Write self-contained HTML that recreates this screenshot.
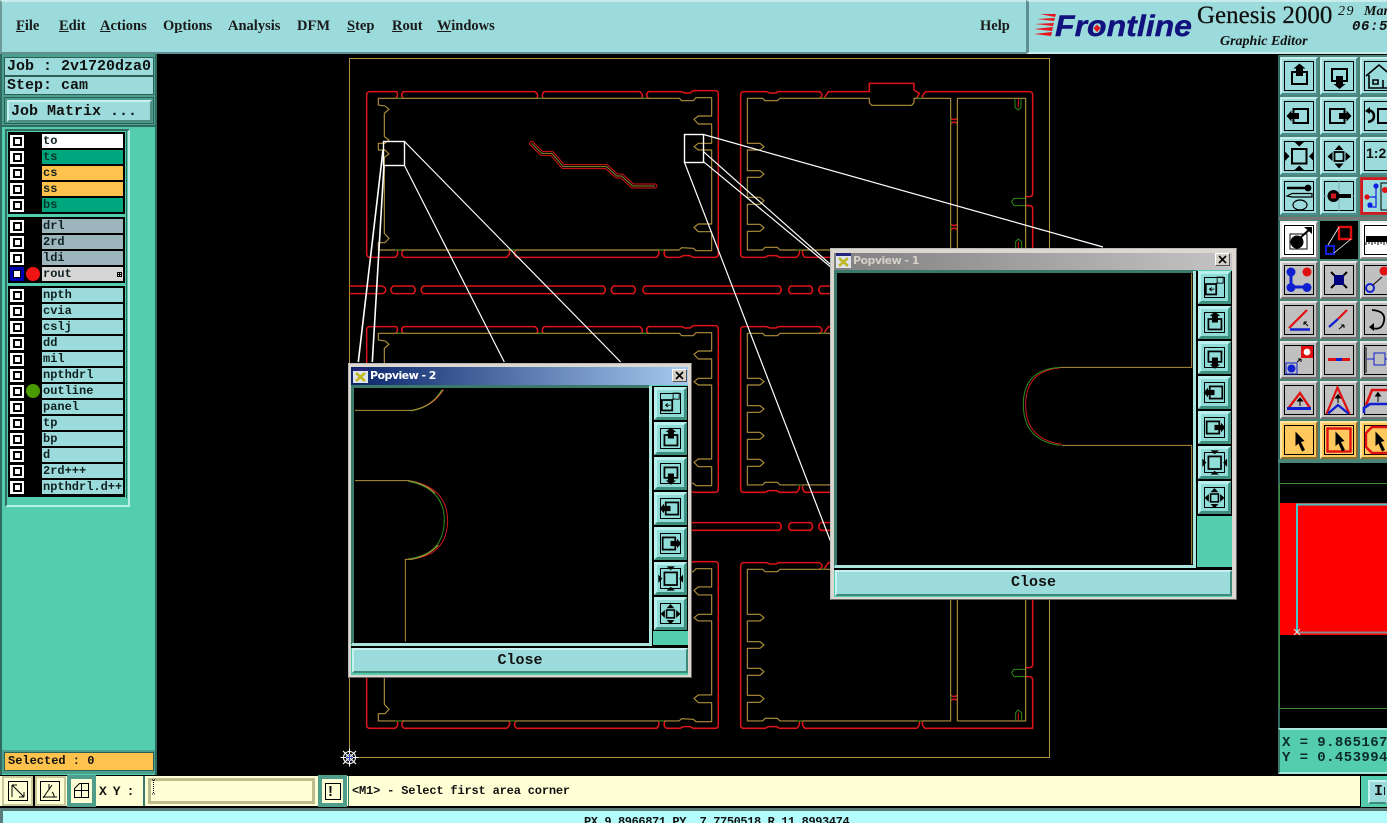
<!DOCTYPE html>
<html><head><meta charset="utf-8"><style>
html,body{margin:0;padding:0;background:#000;width:1387px;height:823px;overflow:hidden}
#r{position:relative;width:1387px;height:823px;overflow:hidden;background:#000}
#r div,#r svg,#r span{position:absolute;box-sizing:border-box}
.m{font-family:"Liberation Mono",monospace;white-space:pre;color:#111}
.mn{font:bold 14.5px/16px "Liberation Serif",serif;top:18px;color:#1a1a1a;white-space:pre}
.mn u{text-decoration:underline}
.lb{left:4px;width:150px;background:#9cdbdb;border:1px solid #2c5f55;font-size:15px;padding-left:2px;font-weight:bold}
.cb{left:10px;width:14px;height:13px;background:#fff}
.cb:after{content:"";position:absolute;left:3px;top:2px;width:9px;height:9px;border:2px solid #000;box-sizing:border-box;background:#fff}
.nm{left:42px;width:81px;height:14px;font:bold 12px/15px "Liberation Mono",monospace;padding-left:1px;color:#102020;background:#9cdbdb;white-space:pre;overflow:hidden}
.tb{width:38px;height:38px;border:2px solid;border-color:#c8efef #4f8d8d #4f8d8d #c8efef;background:#9cdbdb}
.tb.g{background:#c0c0c0;border-color:#e6e6e6 #707070 #707070 #e6e6e6}
.tb.w{background:#fff;border-color:#f0f0f0 #8a8a8a #8a8a8a #f0f0f0}
.tb.o{background:#ffc95e;border-color:#ffe4a0 #8d6d2d #8d6d2d #ffe4a0}
.tb i{position:absolute;left:2px;top:2px;width:30px;height:30px;border:1px solid #000;box-sizing:border-box}
.tb svg{left:-2px;top:-2px;width:38px;height:38px}
.pb{width:33px;height:33px;border:3px solid;border-color:#b8f0ee #3f8f7e #3f8f7e #b8f0ee;background:#90dcd8}
.pb i{position:absolute;left:3px;top:3px;width:21px;height:21px;border:1px solid #000;box-sizing:border-box}
.pb svg{left:-3px;top:-3px;width:33px;height:33px}
.cl{border:2px solid;border-color:#c8f2f2 #3d8a78 #3d8a78 #c8f2f2;background:#9cdbdb;text-align:center;font:bold 15px/21px "Liberation Mono",monospace;color:#111}
.tt{font:bold 11px/16px "DejaVu Sans",sans-serif;letter-spacing:-.55px;white-space:pre}
.x{width:15px;height:13px;background:#d4d0c8;border:1px solid;border-color:#fff #555 #555 #fff}
.bc{fill:none;stroke:#000;stroke-width:2}
</style></head><body><div id="r">

<!-- top bars -->
<div style="left:0;top:0;width:1028px;height:54px;background:#9cdbdb;border-top:2px solid #c8ecec;border-bottom:2px solid #5f8f92;border-left:2px solid #6f9a9a;border-right:2px solid #5f8f92"></div>
<div style="left:1026px;top:0;width:361px;height:54px;background:#9cdbdb;border-left:3px solid #5f8f92;border-bottom:2px solid #c8ecec;border-top:2px solid #c8ecec"></div>
<div class="mn" style="left:16px"><u>F</u>ile</div>
<div class="mn" style="left:59px"><u>E</u>dit</div>
<div class="mn" style="left:100px"><u>A</u>ctions</div>
<div class="mn" style="left:163px">O<u>p</u>tions</div>
<div class="mn" style="left:228px">Analysis</div>
<div class="mn" style="left:297px">DFM</div>
<div class="mn" style="left:347px"><u>S</u>tep</div>
<div class="mn" style="left:392px"><u>R</u>out</div>
<div class="mn" style="left:437px"><u>W</u>indows</div>
<div class="mn" style="left:980px">Help</div>

<!-- logo -->
<svg style="left:1030px;top:0" width="357" height="54" viewBox="1030 0 357 54">
<g fill="#e8141c"><path d="M1040 14L1056 14 1055 17Z"/><path d="M1037 19L1055 18 1054 21Z"/><path d="M1035 24L1054 23 1053 26Z"/><path d="M1034 29L1053 27 1052 31Z"/><path d="M1034 34L1052 32 1051 36Z"/></g>
<text x="1055" y="36" font-family="Liberation Sans" font-weight="bold" font-style="italic" font-size="30" fill="#12127e" stroke="#12127e" stroke-width=".4" textLength="137" lengthAdjust="spacingAndGlyphs">Frontline</text>
<path d="M1097 24.5l3.5 3.8-3.5 3.8-3.5-3.8z" fill="#e8141c"/>
<text x="1197" y="23" font-family="Liberation Serif" font-size="25" fill="#111" stroke="#111" stroke-width=".25">Genesis 2000</text>
<text x="1220" y="45" font-family="Liberation Serif" font-weight="bold" font-style="italic" font-size="14" fill="#111">Graphic Editor</text>
<text x="1338" y="15" font-family="Liberation Serif" font-style="italic" font-size="14" letter-spacing="1.5" fill="#111">29</text>
<text x="1364" y="15" font-family="Liberation Serif" font-weight="bold" font-style="italic" font-size="14" fill="#111">Mar</text>
<text x="1352" y="30" font-family="Liberation Mono" font-weight="bold" font-style="italic" font-size="14" letter-spacing=".6" fill="#111">06:5</text>
</svg>

<!-- left panel -->
<div style="left:0;top:54px;width:157px;height:722px;background:#54cdae;border-right:2px solid #2f6b60;border-left:2px solid #2f6b60"></div>
<div style="left:2px;top:54px;width:153px;height:73px;background:#4c9f8c;border-bottom:2px solid #2f6b60"></div>
<div class="m lb" style="top:57px;height:19px;line-height:18px">Job : 2v1720dza0</div>
<div class="m lb" style="top:76px;height:19px;line-height:18px">Step: cam</div>
<div class="m lb" style="top:97px;height:27px;background:#4c9f8c"></div>
<div class="m" style="left:7px;top:100px;width:145px;height:22px;background:#9cdbdb;border:2px solid;border-color:#c8f2f2 #4d8d82 #4d8d82 #c8f2f2;font:bold 15px/19px 'Liberation Mono',monospace;padding-left:2px">Job Matrix ...</div>

<div style="left:5px;top:129px;width:125px;height:378px;background:#54cdae;border:2px solid;border-color:#2f6b60 #b8f0e4 #b8f0e4 #2f6b60"></div>
<div style="left:7px;top:131px;width:120px;height:367px;background:#54cdae;border-right:1px solid #2f6b60"></div>
<div style="left:8px;top:132px;width:117px;height:82px;background:#000"></div>
<div style="left:8px;top:217px;width:117px;height:66px;background:#000"></div>
<div style="left:8px;top:286px;width:117px;height:211px;background:#000"></div>

<div class="cb" style="top:135px"></div><div class="nm" style="top:134px;background:#fff">to</div>
<div class="cb" style="top:151px"></div><div class="nm" style="top:150px;background:#00a67d;color:#043528">ts</div>
<div class="cb" style="top:167px"></div><div class="nm" style="top:166px;background:#ffc34d">cs</div>
<div class="cb" style="top:183px"></div><div class="nm" style="top:182px;background:#ffc34d">ss</div>
<div class="cb" style="top:199px"></div><div class="nm" style="top:198px;background:#00a67d;color:#043528">bs</div>

<div class="cb" style="top:220px"></div><div class="nm" style="top:219px;background:#9db5bd">drl</div>
<div class="cb" style="top:236px"></div><div class="nm" style="top:235px;background:#9db5bd">2rd</div>
<div class="cb" style="top:252px"></div><div class="nm" style="top:251px;background:#9db5bd">ldi</div>
<div style="left:10px;top:267px;width:14px;height:14px;background:#0000b0"></div>
<div style="left:13px;top:270px;width:8px;height:8px;background:#fff;border:1px solid #000"></div>
<div style="left:26px;top:267px;width:14px;height:14px;border-radius:50%;background:#f01414"></div>
<div class="nm" style="top:267px;background:#d6d6d6">rout</div>
<div style="left:117px;top:272px;width:5px;height:5px;border:1px solid #000;background:linear-gradient(#000,#000) center/1px 5px no-repeat,linear-gradient(#000,#000) center/5px 1px no-repeat"></div>

<div class="cb" style="top:289px"></div><div class="nm" style="top:288px">npth</div>
<div class="cb" style="top:305px"></div><div class="nm" style="top:304px">cvia</div>
<div class="cb" style="top:321px"></div><div class="nm" style="top:320px">cslj</div>
<div class="cb" style="top:337px"></div><div class="nm" style="top:336px">dd</div>
<div class="cb" style="top:353px"></div><div class="nm" style="top:352px">mil</div>
<div class="cb" style="top:369px"></div><div class="nm" style="top:368px">npthdrl</div>
<div class="cb" style="top:385px"></div><div class="nm" style="top:384px">outline</div>
<div style="left:26px;top:384px;width:14px;height:14px;border-radius:50%;background:#4a9a00"></div>
<div class="cb" style="top:401px"></div><div class="nm" style="top:400px">panel</div>
<div class="cb" style="top:417px"></div><div class="nm" style="top:416px">tp</div>
<div class="cb" style="top:433px"></div><div class="nm" style="top:432px">bp</div>
<div class="cb" style="top:449px"></div><div class="nm" style="top:448px">d</div>
<div class="cb" style="top:465px"></div><div class="nm" style="top:464px">2rd+++</div>
<div class="cb" style="top:481px"></div><div class="nm" style="top:480px">npthdrl.d++</div>

<div style="left:2px;top:750px;width:153px;height:24px;background:#4c9f8c"></div>
<div class="m" style="left:4px;top:752px;width:150px;height:19px;background:#ffc34d;border:1px solid #2c5f55;font:bold 12px/17px 'Liberation Mono',monospace;padding-left:3px">Selected : 0</div>

<!-- CAM canvas -->
<svg style="left:0;top:0" width="1387" height="823" viewBox="0 0 1387 823">
<defs>
<g id="bl" fill="none" stroke-linejoin="round">
<g stroke="#dc1418" stroke-width="4.6">
<path d="M168,145Q176,135 170,125L90,125Q80,125 80,135L80,610Q80,622 90,622L165,622Q176,616 172,600"/>
<path d="M190,145Q180,135 190,125L585,125Q598,135 590,145"/>
<path d="M610,145Q603,135 612,125L900,125Q911,135 905,145"/>
<path d="M925,145Q915,135 925,125L1025,125 1035,129 1050,129 1060,122 1125,122Q1135,122 1135,132L1135,612Q1135,622 1125,622L1060,622 1050,617 1030,617 1020,622 980,622Q968,615 975,600"/>
<path d="M190,600Q180,612 192,622L500,622Q512,612 508,600"/>
<path d="M528,600Q518,612 530,622L950,622Q960,612 955,600"/>
</g>
<path stroke="#b0903c" stroke-width="3.4" d="M115,145L1018,145 1025,152 1060,152 1068,143 1115,143 1115,198 1075,198 1062,208 1075,222 1115,222 1115,280 1075,280 1062,290 1075,300 1115,300 1115,522 1075,522 1062,532 1075,545 1115,545 1115,602 1068,602 1060,595 1025,593 1017,600 115,600 115,578 135,578 147,565 133,550 133,322 147,312 135,300 115,300 115,280 135,280 147,270 133,260 133,190 147,178 135,168 115,165Z"/>
<path stroke="#2e8b1a" stroke-width="3" d="M170,145H187M595,145H610M905,145H920M165,600H187M510,600H527M955,600H972"/>
</g>
<g id="br" fill="none" stroke-linejoin="round">
<g stroke="#dc1418" stroke-width="4.6">
<path d="M358,145Q374,135 358,125L235,125 228,129 210,129 200,125 132,125Q122,125 122,135L122,612Q122,622 132,622L195,622 205,617 230,617 238,622 290,622Q300,614 298,600"/>
<path d="M372,145Q378,135 385,125L508,125 508,100 642,100 642,120 658,130 650,145"/>
<path d="M668,145Q665,135 678,125L988,125Q998,125 998,135L998,430Q998,440 988,440L978,440"/>
<path d="M978,467L988,467Q998,467 998,477L998,622 675,622Q665,614 667,600"/>
<path d="M308,600Q305,614 315,622L650,622Q660,614 658,600"/>
<path d="M752,205Q762,212 772,205M752,220Q762,213 772,220M752,523Q762,530 772,523M752,538Q762,531 772,538"/>
<path d="M955,145V172M955,600V575" stroke-width="3"/>
</g>
<path stroke="#b0903c" stroke-width="3.4" d="M142,145L188,145 195,152 232,152 240,145 508,145 508,158 515,166 635,166 642,158 642,145 752,145 752,600 240,600 232,592 195,592 188,600 142,600 142,544 180,544 192,533 180,523 142,523 142,463 180,463 192,452 180,442 142,442 142,382 180,382 192,372 180,362 142,362 142,300 180,300 192,290 180,280 142,280Z"/>
<path stroke="#b0903c" stroke-width="3.4" d="M772,600V145H977V600H772"/>
<path stroke="#2e8b1a" stroke-width="3" d="M362,145H378M650,145H668M290,600H308M650,600H667M945,145V172L955,180 963,172V145M975,445H942L935,455 942,467H975M947,600V575L955,567 965,575V600M752,205V220M752,523V538"/>
</g>
<g id="st" fill="none" stroke="#dc1418" stroke-width="4.6">
<path d="M28,708H125Q137,710 137,720 137,730 125,731H28"/>
<path d="M160,708H220Q231,720 220,731H160Q145,720 160,708Z"/>
<path d="M250,708H790Q802,720 790,731H250Q237,720 250,708Z"/>
<path d="M820,708H880Q892,720 880,731H820Q808,720 820,708Z"/>
<path d="M915,708H1318Q1329,720 1318,731H915Q902,720 915,708Z"/>
<path d="M1352,708H1412Q1423,720 1412,731H1352Q1340,720 1352,708Z"/>
<path d="M1442,708H2127M2127,731H1442Q1431,720 1442,708"/>
</g>
</defs>
<rect x="349.5" y="58.5" width="700" height="699" fill="none" stroke="#b0903c" stroke-width="1"/>
<g transform="translate(340 50) scale(.33333)">
<use href="#bl"/><use href="#bl" y="705"/><use href="#bl" y="1413"/>
<use href="#st"/><use href="#st" y="710"/>
<g fill="none" stroke-linejoin="round"><path d="M575,280L605,310 635,310 670,350 800,350 830,378 845,378 878,408 945,408" stroke="#dc1418" stroke-width="15" stroke-linecap="round"/><path d="M575,280L605,310 635,310 670,350 800,350 830,378 845,378 878,408 945,408" stroke="#000" stroke-width="9" stroke-linecap="round"/><path d="M575,280L605,310 635,310 670,350 800,350 830,378 845,378 878,408 945,408" stroke="#8a8a30" stroke-width="3"/></g>
</g>
<g transform="translate(700 50) scale(.33333)">
<use href="#br"/><use href="#br" y="705"/><use href="#br" y="1413"/>
</g>
<!-- white lines -->
<g fill="none" stroke="#fff" stroke-width="1.2">
<rect x="383.5" y="141.5" width="21" height="24" stroke-width="1.4"/>
<path d="M404.5 141.5L620.7 362M404.5 165.5L504.3 362"/>
<path d="M383 150L358.3 362M384 165L372.3 362" stroke-width="1.6"/>
<rect x="684.5" y="134.5" width="19" height="28" stroke-width="1.4"/>
<path d="M703.5 134.5L1103 247M703.5 151.7L830 264M703.5 161.7L832 268M684.5 162.5L832 545"/>
</g>
<g stroke="#fff" stroke-width="1.1" fill="none">
<circle cx="349.5" cy="757.5" r="6"/><circle cx="349.5" cy="757.5" r="3"/>
<path d="M340.5 757.5H358.5M349.5 748.5V766.5M343 751L356 764M356 751L343 764"/>
</g>
<path d="M346 757.5H353M349.5 754V761" stroke="#3040d0" stroke-width="1"/>
</svg>

<!-- popup 2 -->
<div style="left:348px;top:363px;width:344px;height:315px;background:#dcd8d0;border:1px solid #bbb;border-right-color:#666;border-bottom-color:#666"></div>
<div style="left:351px;top:367px;width:337px;height:18px;background:linear-gradient(90deg,#0a246a,#a6caf0)"></div>
<svg style="left:353px;top:368px" width="15" height="15" viewBox="0 0 15 15"><rect width="15" height="15" fill="#dfe4ef"/><rect width="15" height="3" fill="#24247a"/><path d="M3 5L12 13M12 5L3 13" stroke="#c0b820" stroke-width="2.6"/></svg>
<div class="tt" style="left:370px;top:368px;color:#fff">Popview - 2</div>
<div class="x" style="left:672px;top:369px"></div>
<svg style="left:672px;top:369px" width="15" height="13"><path d="M4 3L11 10M11 3L4 10" stroke="#000" stroke-width="1.6"/></svg>
<div style="left:351px;top:385px;width:337px;height:290px;background:#54cdae"></div>
<div style="left:351px;top:385px;width:298px;height:3px;background:#3a7a6a"></div>
<div style="left:351px;top:385px;width:3px;height:259px;background:#3a7a6a"></div>
<div style="left:354px;top:388px;width:295px;height:255px;background:#000"></div>
<div style="left:649px;top:386px;width:3px;height:259px;background:#a8e6de"></div>
<div style="left:352px;top:643px;width:300px;height:3px;background:#a8e6de"></div>
<div style="left:652px;top:386px;width:36px;height:261px;background:#000"></div>
<div style="left:653px;top:631px;width:35px;height:14px;background:#54cdae"></div>
<div style="left:351px;top:646px;width:337px;height:2px;background:#000"></div>
<div class="cl" style="left:352px;top:648px;width:336px;height:25px">Close</div>

<svg style="left:345px;top:355px" width="350" height="330" viewBox="0 0 1050 990"><g fill="none" stroke-width="3">
<path d="M200,166Q262,158 296,103" stroke="#d01820"/><path d="M190,377Q306,395 308,497 306,605 190,613" stroke="#d01820"/>
<path d="M196,168Q258,160 290,105M190,379Q298,400 298,497 295,600 190,611" stroke="#2e8b1a"/>
<path d="M30,166H200Q260,156 294,104M30,377H190M190,377Q240,385 270,415M181,860V613H200Q250,603 280,570" stroke="#b0903c"/></g></svg>

<!-- popup 1 -->
<div style="left:830px;top:248px;width:407px;height:352px;background:#dcd8d0;border:1px solid #bbb;border-right-color:#666;border-bottom-color:#666"></div>
<div style="left:834px;top:253px;width:398px;height:17px;background:linear-gradient(90deg,#808080,#c4c4c4)"></div>
<svg style="left:836px;top:253px" width="15" height="15" viewBox="0 0 15 15"><rect width="15" height="15" fill="#dfe4ef"/><rect width="15" height="3" fill="#24247a"/><path d="M3 5L12 13M12 5L3 13" stroke="#c0b820" stroke-width="2.6"/></svg>
<div class="tt" style="left:853px;top:253px;color:#d4d0c8">Popview - 1</div>
<div class="x" style="left:1215px;top:253px"></div>
<svg style="left:1215px;top:253px" width="15" height="13"><path d="M4 3L11 10M11 3L4 10" stroke="#000" stroke-width="1.6"/></svg>
<div style="left:834px;top:270px;width:398px;height:327px;background:#54cdae"></div>
<div style="left:834px;top:270px;width:363px;height:3px;background:#3a7a6a"></div>
<div style="left:834px;top:270px;width:3px;height:296px;background:#3a7a6a"></div>
<div style="left:837px;top:273px;width:356px;height:292px;background:#000"></div>
<div style="left:1193px;top:271px;width:3px;height:295px;background:#a8e6de"></div>
<div style="left:835px;top:565px;width:361px;height:3px;background:#a8e6de"></div>
<div style="left:1196px;top:271px;width:36px;height:297px;background:#000"></div>
<div style="left:1197px;top:516px;width:35px;height:51px;background:#54cdae"></div>
<div style="left:834px;top:568px;width:398px;height:2px;background:#000"></div>
<div class="cl" style="left:835px;top:570px;width:397px;height:26px;line-height:22px">Close</div>

<svg style="left:825px;top:240px" width="420" height="370" viewBox="0 0 1260 1110"><g fill="none" stroke-width="3">
<path d="M705,384Q602,392 602,495 602,598 710,613" stroke="#d01820"/>
<path d="M705,382Q594,388 595,495 596,602 705,616" stroke="#2e8b1a"/>
<path d="M1100,100V382H705M710,616H1100V972" stroke="#b0903c"/></g></svg>

<!-- popup tool buttons via symbols -->
<svg width="0" height="0" style="left:0;top:0"><defs>
<symbol id="iup" viewBox="0 0 38 38"><rect class="bc" x="12" y="15" width="15" height="12"/><path d="M19.5 6.5L25.5 11.5H23V19H16V11.5H13.5Z"/></symbol>
<symbol id="idn" viewBox="0 0 38 38"><rect class="bc" x="12" y="12" width="15" height="12"/><path d="M19.5 32L25.5 27H23V19H16V27H13.5Z"/></symbol>
<symbol id="ilf" viewBox="0 0 38 38"><rect class="bc" x="13.5" y="12" width="14.5" height="14"/><path d="M6.5 19L11.5 13.5V16H19V22H11.5V24.5Z"/></symbol>
<symbol id="irt" viewBox="0 0 38 38"><rect class="bc" x="10" y="12" width="14.5" height="14"/><path d="M31.5 19L26.5 13.5V16H19V22H26.5V24.5Z"/></symbol>
<symbol id="ift" viewBox="0 0 38 38"><rect class="bc" x="12" y="12" width="14.5" height="14.5"/><path d="M14.5 5H24L19.2 9.5ZM14.5 33H24L19.2 28.5ZM5 14.5V24L9.5 19.2ZM33.5 14.5V24L29 19.2Z"/></symbol>
<symbol id="ict" viewBox="0 0 38 38"><rect x="14.5" y="15" width="9" height="9" fill="none" stroke="#000" stroke-width="1.8"/><path d="M19 8L23.5 13H14.5ZM19 31.5L23.5 26.5H14.5ZM7.5 19.5L12.5 15V24ZM30.5 19.5L25.5 15V24Z"/></symbol>
<symbol id="izm" viewBox="0 0 38 38"><rect class="bc" x="9" y="15" width="12" height="12"/><rect x="22" y="7" width="7" height="7" fill="none" stroke="#000"/><path d="M13 21h6M13 21l3-2M13 21l3 2" stroke="#000" fill="none"/><path d="M21 15l2-2" stroke="#000"/></symbol>
</defs></svg>

<div class="pb" style="left:654px;top:387px"><i></i><svg><use href="#izm"/></svg></div>
<div class="pb" style="left:654px;top:422px"><i></i><svg><use href="#iup"/></svg></div>
<div class="pb" style="left:654px;top:457px"><i></i><svg><use href="#idn"/></svg></div>
<div class="pb" style="left:654px;top:492px"><i></i><svg><use href="#ilf"/></svg></div>
<div class="pb" style="left:654px;top:527px"><i></i><svg><use href="#irt"/></svg></div>
<div class="pb" style="left:654px;top:562px"><i></i><svg><use href="#ift"/></svg></div>
<div class="pb" style="left:654px;top:597px"><i></i><svg><use href="#ict"/></svg></div>

<div class="pb" style="left:1198px;top:271px"><i></i><svg><use href="#izm"/></svg></div>
<div class="pb" style="left:1198px;top:306px"><i></i><svg><use href="#iup"/></svg></div>
<div class="pb" style="left:1198px;top:341px"><i></i><svg><use href="#idn"/></svg></div>
<div class="pb" style="left:1198px;top:376px"><i></i><svg><use href="#ilf"/></svg></div>
<div class="pb" style="left:1198px;top:411px"><i></i><svg><use href="#irt"/></svg></div>
<div class="pb" style="left:1198px;top:446px"><i></i><svg><use href="#ift"/></svg></div>
<div class="pb" style="left:1198px;top:481px"><i></i><svg><use href="#ict"/></svg></div>

<!-- right toolbar -->
<div style="left:1278px;top:55px;width:109px;height:408px;background:#4a8578;border-left:2px solid #2f6b60"></div>
<div style="left:1279px;top:217px;width:108px;height:3px;background:#777"></div>

<div class="tb" style="left:1280px;top:57px"><i></i><svg viewBox="0 0 38 38"><use href="#iup"/></svg></div>
<div class="tb" style="left:1320px;top:57px"><i></i><svg viewBox="0 0 38 38"><use href="#idn"/></svg></div>
<div class="tb" style="left:1360px;top:57px"><i></i><svg viewBox="0 0 38 38"><path d="M6 19L19 8 32 19M9 18V31H29V18M13 23h5v4h-5zM23 23v8" fill="none" stroke="#000" stroke-width="1.6"/></svg></div>
<div class="tb" style="left:1280px;top:97px"><i></i><svg viewBox="0 0 38 38"><use href="#ilf"/></svg></div>
<div class="tb" style="left:1320px;top:97px"><i></i><svg viewBox="0 0 38 38"><use href="#irt"/></svg></div>
<div class="tb" style="left:1360px;top:97px"><i></i><svg viewBox="0 0 38 38"><path d="M8 13Q14 14 14 19T8 25" fill="none" stroke="#000" stroke-width="2.4"/><path d="M5 14L10 10V17Z"/><rect class="bc" x="18" y="12" width="14" height="14"/></svg></div>
<div class="tb" style="left:1280px;top:137px"><i></i><svg viewBox="0 0 38 38"><use href="#ift"/></svg></div>
<div class="tb" style="left:1320px;top:137px"><i></i><svg viewBox="0 0 38 38"><use href="#ict"/></svg></div>
<div class="tb" style="left:1360px;top:137px"><i></i><span style="left:4px;top:6px;font:bold 14px/16px 'Liberation Sans',sans-serif;color:#111">1:2</span></div>
<div class="tb" style="left:1280px;top:177px"><i></i><svg viewBox="0 0 38 38"><path d="M7 11H26" stroke="#000" stroke-width="2.4"/><circle cx="28" cy="11" r="3.4"/><path d="M7 19L12 16.5H32V20H12Z" fill="none" stroke="#000" stroke-width="1.2"/><ellipse cx="20" cy="28" rx="7" ry="5" fill="none" stroke="#000" stroke-width="1.2"/></svg></div>
<div class="tb" style="left:1320px;top:177px"><i></i><svg viewBox="0 0 38 38"><path d="M19 4V34M4 19H34" stroke="#8aa" stroke-width="1"/><circle cx="13.5" cy="19" r="6"/><rect x="11" y="16.5" width="5" height="5" fill="#d01820"/><rect x="17" y="17" width="14" height="4"/></svg></div>
<div class="tb" style="left:1360px;top:177px;border-color:#c03030"><svg viewBox="0 0 38 38"><rect x="2" y="2" width="34" height="34" fill="none" stroke="#d01820" stroke-width="2"/><path d="M16 10V20H6M16 20V30H8" stroke="#1020e0" stroke-width="1.2" fill="none"/><circle cx="16" cy="9" r="2.6" fill="#1020e0"/><circle cx="7" cy="20" r="2.6" fill="#e01010"/><circle cx="10" cy="28" r="2.6" fill="#1020e0"/><rect x="21" y="6" width="13" height="27" fill="none" stroke="#000"/><circle cx="25" cy="13" r="3" fill="#e01010"/></svg></div>

<div class="tb w" style="left:1280px;top:221px"><i></i><svg viewBox="0 0 38 38"><circle cx="17" cy="21" r="6.5"/><rect x="10" y="13" width="17" height="15" fill="none" stroke="#000"/><path d="M20 17L30 8" stroke="#000" stroke-width="2"/><path d="M24 6H32V13Z"/></svg></div>
<div class="tb w" style="left:1320px;top:221px;background:#000"><svg viewBox="0 0 38 38"><rect width="38" height="38" fill="#000"/><rect x="19" y="6" width="12" height="12" fill="none" stroke="#e01010" stroke-width="2.4"/><rect x="6" y="25" width="8" height="8" fill="none" stroke="#1020e0" stroke-width="2"/><path d="M8 24L19 6M14 32L31 18" stroke="#fff" stroke-width=".8"/></svg></div>
<div class="tb w" style="left:1360px;top:221px"><i></i><svg viewBox="0 0 38 38"><path d="M6 15H34V21H6Z"/><path d="M6 21v3M9 21v2M12 21v3M15 21v2M18 21v3M21 21v2M24 21v3M27 21v2" stroke="#000"/></svg></div>

<div class="tb g" style="left:1280px;top:261px"><i></i><svg viewBox="0 0 38 38"><path d="M11 11V26H27" stroke="#1020d0" stroke-width="3" fill="none"/><circle cx="11" cy="11" r="4.5" fill="#1020d0"/><circle cx="11" cy="26.5" r="4.5" fill="#1020d0"/><circle cx="27" cy="26.5" r="4.5" fill="#1020d0"/><circle cx="27" cy="11" r="4.5" fill="#e01010"/></svg></div>
<div class="tb g" style="left:1320px;top:261px"><i></i><svg viewBox="0 0 38 38"><path d="M11 11L27 27M27 11L11 27" stroke="#000" stroke-width="2"/><rect x="14" y="14" width="10" height="10" fill="#000080"/></svg></div>
<div class="tb g" style="left:1360px;top:261px"><i></i><svg viewBox="0 0 38 38"><circle cx="24" cy="10" r="4.5" fill="#e01010"/><circle cx="10" cy="27" r="4" fill="none" stroke="#1020d0" stroke-width="2"/><path d="M13 24L22 16" stroke="#000"/></svg></div>

<div class="tb g" style="left:1280px;top:301px"><i></i><svg viewBox="0 0 38 38"><path d="M9 27L27 9" stroke="#e01010" stroke-width="2.2"/><path d="M10 28.5H30" stroke="#1020d0" stroke-width="2.4"/><path d="M24 21l4 4M24 21l3 0M24 21l0 3" stroke="#000"/></svg></div>
<div class="tb g" style="left:1320px;top:301px"><i></i><svg viewBox="0 0 38 38"><path d="M18 18L27 9" stroke="#e01010" stroke-width="2.2"/><path d="M9 26L18 18" stroke="#1020d0" stroke-width="2.2"/><path d="M19 28l5-4M24 24h-3M24 24v3" stroke="#000"/></svg></div>
<div class="tb g" style="left:1360px;top:301px"><i></i><svg viewBox="0 0 38 38"><path d="M12 9Q26 10 24 20T12 27" fill="none" stroke="#000" stroke-width="1.8"/><path d="M9 26L14 22V30Z"/></svg></div>

<div class="tb g" style="left:1280px;top:341px"><i></i><svg viewBox="0 0 38 38"><rect x="21" y="5" width="12" height="12" fill="#e01010"/><circle cx="27" cy="11" r="3.4" fill="#fff"/><rect x="6" y="22" width="11" height="11" fill="none" stroke="#1020d0"/><circle cx="11.5" cy="27.5" r="4" fill="#1020d0"/><path d="M17 21l4-3M21 18h-3M21 18v3" stroke="#000"/></svg></div>
<div class="tb g" style="left:1320px;top:341px"><i></i><svg viewBox="0 0 38 38"><path d="M8 18.5H30" stroke="#e01010" stroke-width="3"/><path d="M16 18.5H22" stroke="#1020d0" stroke-width="3"/></svg></div>
<div class="tb g" style="left:1360px;top:341px"><i></i><svg viewBox="0 0 38 38"><path d="M6 6V32" stroke="#000"/><rect x="14" y="12" width="11" height="12" fill="none" stroke="#1020d0"/><path d="M7 18H14M25 18H33" stroke="#1020d0"/></svg></div>

<div class="tb g" style="left:1280px;top:381px"><i></i><svg viewBox="0 0 38 38"><path d="M8.5 27L20 12 30 27" fill="none" stroke="#e01010" stroke-width="2.4"/><path d="M7 27.5H31" stroke="#1020d0" stroke-width="3"/><path d="M20 25V18M17.5 20L20 17 22.5 20Z" stroke="#000" fill="#000"/></svg></div>
<div class="tb g" style="left:1320px;top:381px"><i></i><svg viewBox="0 0 38 38"><path d="M6.5 33L17.5 6.5 29.5 33" fill="none" stroke="#e01010" stroke-width="2.2"/><path d="M8 32.5L18 24 28.5 32.5" fill="none" stroke="#1020d0" stroke-width="2.4"/><path d="M18 22V15M15.5 17L18 13.5 20.5 17Z" stroke="#000" fill="#000"/></svg></div>
<div class="tb g" style="left:1360px;top:381px"><i></i><svg viewBox="0 0 38 38"><path d="M6 24L12 9H28L34 24" fill="none" stroke="#e01010" stroke-width="2.6"/><path d="M4 32V27L10 23H34" fill="none" stroke="#1020d0" stroke-width="2.6"/><path d="M18 21V13M15.5 15L18 11.5 20.5 15Z" stroke="#000" fill="#000"/></svg></div>

<div class="tb o" style="left:1280px;top:421px"><i></i><svg viewBox="0 0 38 38"><path d="M15.5 10.5L24.5 20 21 21 25 29 22 30.5 18.5 22.5 15.5 25Z"/></svg></div>
<div class="tb o" style="left:1320px;top:421px"><i></i><svg viewBox="0 0 38 38"><rect x="7.5" y="7.5" width="23" height="23" fill="none" stroke="#e01010" stroke-width="2.4"/><path d="M15.5 10.5L24.5 20 21 21 25 29 22 30.5 18.5 22.5 15.5 25Z"/></svg></div>
<div class="tb o" style="left:1360px;top:421px"><i></i><svg viewBox="0 0 38 38"><path d="M12 6H30V32H12L6 26V12Z" fill="none" stroke="#e01010" stroke-width="2.4"/><path d="M15.5 10.5L24.5 20 21 21 25 29 22 30.5 18.5 22.5 15.5 25Z"/></svg></div>

<!-- mini map -->
<div style="left:1278px;top:459px;width:109px;height:4px;background:#4a8578"></div>
<div style="left:1278px;top:463px;width:2px;height:267px;background:#2f6b60"></div>
<svg style="left:1278px;top:463px" width="109" height="267" viewBox="1278 463 109 267">
<rect x="1279.5" y="483.5" width="120" height="225" fill="none" stroke="#3d8a30"/>
<rect x="1280" y="503" width="107" height="132" fill="#fe0000"/>
<path d="M1387 504.5H1297V632" fill="none" stroke="#45c8c8" stroke-width="2"/>
<path d="M1297 632.5H1387" stroke="#8a8a8a" stroke-width="2"/>
<path d="M1294 629L1300 635M1300 629L1294 635" stroke="#cfeeee"/>
</svg>

<!-- coordinates -->
<div style="left:1278px;top:728px;width:109px;height:46px;background:#54cdae;border-top:2px solid #a8e6de;border-left:2px solid #3a7a6a;border-bottom:2px solid #a8e6de"></div>
<div class="m" style="left:1282px;top:736px;font:bold 14px/15px 'Liberation Mono',monospace;letter-spacing:.42px;color:#0c2a2a">X = 9.865167
Y = 0.453994</div>

<!-- status bar -->
<div style="left:0;top:775px;width:1387px;height:31px;background:#ffffd6;border-top:1px solid #000"></div>
<div style="left:0;top:806px;width:1387px;height:2px;background:#000"></div>
<div style="left:0;top:808px;width:1387px;height:15px;background:#587a78"></div>
<div style="left:3px;top:811px;width:1384px;height:12px;background:#b4fcfc"></div>
<div class="m" style="left:584px;top:816px;font:bold 12px/13px 'Liberation Mono',monospace;letter-spacing:-.4px;color:#111">PX 9.8966871 PY  7.7750518 R 11.8993474</div>

<div style="left:2px;top:776px;width:31px;height:30px;border:2px solid #c8c89a;background:#ffffd6"></div>
<div style="left:35px;top:776px;width:31px;height:30px;border:2px solid #c8c89a;background:#ffffd6"></div>
<div style="left:33px;top:776px;width:2px;height:30px;background:#000"></div>
<svg style="left:8px;top:781px" width="20" height="20"><rect x=".5" y=".5" width="19" height="19" fill="none" stroke="#000"/><path d="M4 4L16 16M4 4h5M4 4v5M16 16h-5M16 16v-5M4 4V16" stroke="#000" fill="none"/></svg>
<svg style="left:40px;top:781px" width="20" height="20"><rect x=".5" y=".5" width="19" height="19" fill="none" stroke="#000"/><path d="M3 17L12 4M3 16H17M9 3v6M12 11a6 6 0 0 1 2 5" stroke="#000" fill="none"/></svg>
<div style="left:67px;top:775px;width:29px;height:32px;background:#ffffd6;border:4px solid #4f9e8c"></div>
<svg style="left:74px;top:783px" width="15" height="15"><path d="M.5 14.5V5.5L5.5.5H14.5V14.5ZM.5 7.5H14.5M7.5 .5V14.5" fill="none" stroke="#000"/></svg>
<div class="m" style="left:99px;top:784px;font:bold 13px/15px 'Liberation Mono',monospace;letter-spacing:-.9px">X Y :</div>
<div style="left:143px;top:776px;width:2px;height:30px;background:#3a7a6a"></div>
<div style="left:145px;top:776px;width:172px;height:30px;background:#ffffd6"></div>
<div style="left:148px;top:778px;width:167px;height:26px;border:3px solid #bcbc8c;background:#ffffd6"></div>
<svg style="left:151px;top:779px" width="5" height="16"><path d="M2.5 1V15M1 1H4M1 15H4" stroke="#000" stroke-dasharray="1 1"/></svg>
<div style="left:318px;top:775px;width:29px;height:32px;background:#ffffd6;border:4px solid #4f9e8c"></div>
<div style="left:325px;top:783px;width:16px;height:17px;border:1px solid #000"></div>
<div class="m" style="left:328px;top:784px;font:bold 15px/15px 'Liberation Sans',sans-serif">!</div>
<div style="left:348px;top:776px;width:1px;height:30px;background:#3a7a6a"></div>
<div class="m" style="left:352px;top:784px;font:bold 12px/14px 'Liberation Mono',monospace;letter-spacing:-.17px">&lt;M1&gt; - Select first area corner</div>
<div style="left:1360px;top:776px;width:27px;height:31px;background:#54cdae;border-left:1px solid #000"></div>
<div class="m" style="left:1368px;top:780px;width:19px;height:24px;background:#9cdbdb;border:2px solid;border-color:#c8f2f2 transparent #3d8a78 #c8f2f2;font:bold 15px/20px 'Liberation Mono',monospace;padding-left:4px;overflow:hidden">In</div>

</div></body></html>
